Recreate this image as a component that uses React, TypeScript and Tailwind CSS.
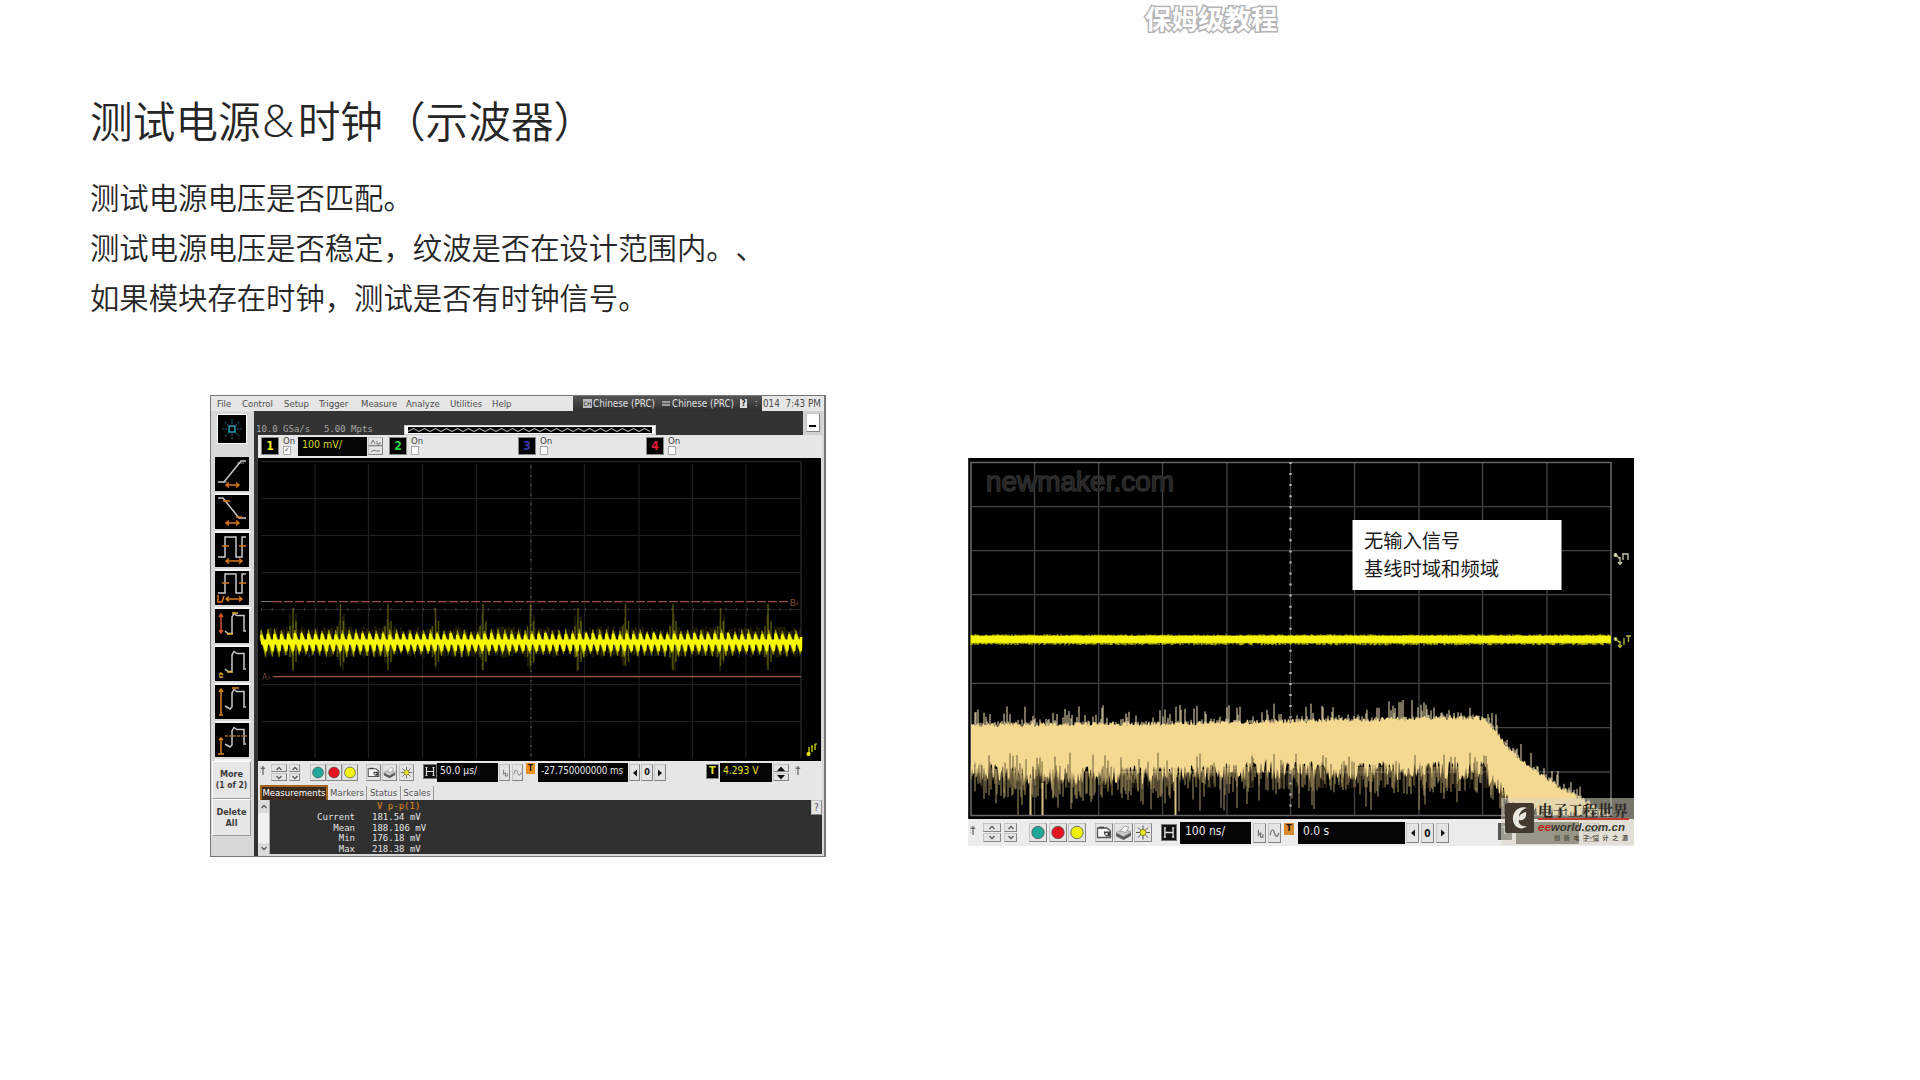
import React from "react";

const CJK = "font-['Noto_Sans_CJK_SC',sans-serif]";
const UI = "font-['DejaVu_Sans_Condensed','DejaVu_Sans',sans-serif]";
const MONO = "font-['DejaVu_Sans_Mono',monospace]";

/* Deterministic noise in 0..1 */
function rng(seed: number) {
  let s = seed;
  return () => {
    s = (s * 1664525 + 1013904223) % 4294967296;
    return s / 4294967296;
  };
}

type P = { className?: string; children?: React.ReactNode };

function Key({ className = "", children }: P) {
  return (
    <div className={`flex shrink-0 items-center justify-center overflow-hidden border border-t-[#c4c4c4] border-l-[#c4c4c4] border-r-[#858585] border-b-[#858585] bg-[#e4e4e4] ${className}`}>
      {children}
    </div>
  );
}

function Chevron({ down }: { down?: boolean }) {
  return (
    <svg width="8" height="5" viewBox="0 0 8 5">
      <path d={down ? "M1.5 1L4 3.6 6.5 1" : "M1.5 4L4 1.4 6.5 4"} fill="none" stroke="#555" strokeWidth="1.3" />
    </svg>
  );
}

function Spinner({ className = "" }: P) {
  return (
    <div className={`flex shrink-0 flex-col gap-px ${className}`}>
      <Key className="flex-1"><Chevron /></Key>
      <Key className="flex-1"><Chevron down /></Key>
    </div>
  );
}

function Dagger({ className = "" }: P) {
  return (
    <svg className={`shrink-0 ${className}`} width="6" height="10" viewBox="0 0 6 10">
      <path d="M3 1V10M0.8 3.2H5.2" stroke="#444" strokeWidth="1" fill="none" />
      <path d="M0.5 1V9" stroke="#aaa" strokeWidth="0.8" strokeDasharray="1 1" />
    </svg>
  );
}

function Dot({ color, className = "" }: P & { color: string }) {
  return (
    <Key className={className}>
      <svg width="100%" height="100%" viewBox="0 0 16 16">
        <circle cx="8" cy="8" r="6.2" fill={color} stroke="#555" strokeWidth="0.8" />
      </svg>
    </Key>
  );
}

function Camera() {
  return (
    <svg width="100%" height="100%" viewBox="0 0 16 16">
      <path d="M1.5 3.5H11L14.5 6.5V13H1.5Z" fill="#f7f7f7" stroke="#555" strokeWidth="1.3" />
      <path d="M3 3H8" stroke="#444" strokeWidth="1.6" />
      <path d="M8 7H14V12H10L8 9.5Z" fill="#3c3c3c" />
      <circle cx="10.5" cy="9.5" r="1.3" fill="#ddd" />
    </svg>
  );
}

function Printer() {
  return (
    <svg width="100%" height="100%" viewBox="0 0 16 16">
      <path d="M1 8L8 4.5 15 7.5 8 12Z" fill="#c9c9c9" stroke="#888" strokeWidth="0.6" />
      <path d="M1 8.5L8 12 15 8V11L8 15 1 11.5Z" fill="#595959" />
      <path d="M5 6.5L9 2 13 3 10 8Z" fill="#f8f8f8" stroke="#888" strokeWidth="0.7" />
    </svg>
  );
}

function Sun() {
  return (
    <svg width="100%" height="100%" viewBox="0 0 16 16">
      <path d="M8 1V15M1 8H15M3 3L13 13M13 3L3 13" stroke="#555" strokeWidth="1" />
      <circle cx="8" cy="8" r="3.1" fill="#e8e02a" stroke="#77761a" strokeWidth="0.8" />
    </svg>
  );
}

function Squiggle({ big }: { big?: boolean }) {
  return (
    <svg width="100%" height="100%" viewBox="0 0 10 16">
      <path d={big ? "M1 10C2 4 4 4 5 8S8 12 9 8" : "M4 5V10L6 8V12M6 12H8V9"} fill="none" stroke="#777" strokeWidth="1.1" />
    </svg>
  );
}

function Arrow({ right }: { right?: boolean }) {
  return (
    <svg width="6" height="8" viewBox="0 0 6 8">
      <path d={right ? "M1 0.5L5 4 1 7.5Z" : "M5 0.5L1 4 5 7.5Z"} fill="#111" />
    </svg>
  );
}

function HBox({ className = "" }: P) {
  return (
    <div className={`shrink-0 border border-[#777] bg-[#111] ${className}`}>
      <svg className="block h-full w-full" viewBox="0 0 12 12">
        <path d="M2.5 2V10M9.5 2V10M2.5 6H9.5M1.5 2H3.5M8.5 2H10.5M1.5 10H3.5M8.5 10H10.5" stroke="#ddd" strokeWidth="1.2" />
      </svg>
    </div>
  );
}

function Field({ className = "", children }: P) {
  return <div className={`shrink-0 overflow-hidden whitespace-nowrap ${className}`}>{children}</div>;
}

/* Measurement shortcut glyphs in the side bar */
const steps = [
  <g key="a"><path d="M3 25H9L26 4H31" /><path d="M7 25H12M22 6H29" strokeWidth="0.7" /><path className="stroke-[#d9761c]" d="M12 28H23M14 25.5L11 28 14 30.5M21 25.5L24 28 21 30.5" /></g>,
  <g key="b"><path d="M3 3H8L24 23H31" /><path className="stroke-[#d9761c]" d="M8 6H15M21 22H27M12 28H23M14 25.5L11 28 14 30.5M21 25.5L24 28 21 30.5" /></g>,
  <g key="c"><path d="M3 24H10V4H21V24H27V4H31" /><path className="stroke-[#d9761c]" d="M7 13H14M24 13H31M12 28H26M14 25.5L11 28 14 30.5M24 25.5L27 28 24 30.5" /></g>,
  <g key="d"><path d="M3 22H10V3H21V22H27V3H31" /><path className="stroke-[#d9761c]" d="M7 12H14M24 12H31M12 28H26M14 25.5L11 28 14 30.5M24 25.5L27 28 24 30.5M3 24V31H7M9 25L7 31" /></g>,
  <g key="e"><path d="M10 22L13 24.5H17V8L19 4.5 22 6.5H29V22H31" /><path className="stroke-[#d9552c]" d="M6 6V23M4 8L6 5 8 8M4 21L6 24 8 21" /><path className="stroke-[#e0a92c]" d="M17 4H23M12 25H18" /></g>,
  <g key="f"><path d="M10 22L13 24.5H17V8L19 4.5 22 6.5H29V22H31" /><path className="stroke-[#e0a92c]" d="M12 25H18M4 30H8M4 28L6 26 8 28" /></g>,
  <g key="g"><path d="M10 21L15 24 17 22V8L19 4.5 22 6.5H29V22H31" /><path className="stroke-[#d9861c]" d="M6 5V30M4 7L6 4 8 7M4 30H8M17 3H24" /></g>,
  <g key="h"><path d="M10 21L15 24 17 22V8L19 4.5 22 6.5H29V21H31" /><path className="stroke-[#d9861c]" d="M6 16V31M4 17L6 15 8 17M3 31H9" /><path className="stroke-[#a8641c]" strokeDasharray="3 1" d="M10 13H32" /></g>,
];

function SideBar() {
  return (
    <div className="flex w-[43px] shrink-0 flex-col bg-[#d8d8d8] pl-[4px]">
      <div className="mt-[3px] ml-[2px] h-[30px] w-[30px] border border-white bg-black">
        <svg viewBox="0 0 28 28" className="block h-full w-full">
          <g stroke="#18606e" strokeWidth="1.1" fill="none">
            <path d="M14 4V9M14 19V25M4 14H9M19 14H24M7 7L10 10M18 18L21 21M21 7L18 10M7 21L10 18" strokeDasharray="2 1" />
            <rect x="11" y="11" width="6" height="6" stroke="#2ba0b0" strokeWidth="1.5" />
          </g>
        </svg>
      </div>
      <div className="mt-[13px] flex flex-col">
        {steps.map((g, i) => (
          <div key={i} className="h-[38px] w-[36px] border-b-2 border-[#f4f4f4]">
            <svg width="34" height="34" viewBox="0 0 34 34" preserveAspectRatio="none" className="block bg-black">
              <g fill="none" stroke="#c8c8c8" strokeWidth="1.5">{g}</g>
            </svg>
          </div>
        ))}
      </div>
      <div className={`-ml-[3px] flex h-[38px] w-[39px] flex-col items-center justify-center border border-white border-r-[#999] border-b-[#999] bg-[#e6e6e6] text-[9px] leading-[11px] font-bold text-[#3a3a3a] ${UI}`}>
        <span>More</span><span className="text-[8.5px]">(1 of 2)</span>
      </div>
      <div className={`-ml-[3px] flex h-[37px] w-[39px] flex-col items-center justify-center border border-white border-r-[#999] border-b-[#999] bg-[#e6e6e6] text-[9px] leading-[11px] font-bold text-[#3a3a3a] ${UI}`}>
        <span>Delete</span><span>All</span>
      </div>
    </div>
  );
}

function MenuBar() {
  return (
    <div className={`flex h-[15px] shrink-0 items-center bg-[#e6e6e6] text-[9.5px] leading-[14px] whitespace-nowrap text-[#4c4c4c] ${UI}`}>
      <span className="ml-[6px] w-[25px]">File</span>
      <span className="w-[42px]">Control</span>
      <span className="w-[35px]">Setup</span>
      <span className="w-[42px]">Trigger</span>
      <span className="w-[45px]">Measure</span>
      <span className="w-[44px]">Analyze</span>
      <span className="w-[42px]">Utilities</span>
      <span className="w-[81px]">Help</span>
      <div className="flex h-[16px] w-[189px] shrink-0 items-center bg-linear-to-b from-[#555] to-[#2c2c2c] text-[9.8px] text-[#e0e0e0]">
        <span className="ml-[10px] flex h-[9px] w-[9px] items-center justify-center bg-[#bbb] text-[6px] text-[#222]">CH</span>
        <span className="ml-[1px] w-[69px]">Chinese (PRC)</span>
        <svg width="8" height="5"><rect width="8" height="5" fill="#999" /><path d="M0 2.5H8" stroke="#555" /></svg>
        <span className="ml-[2px] w-[68px]">Chinese (PRC)</span>
        <span className="flex h-[9px] w-[7px] items-center justify-center bg-[#ddd] text-[8px] font-bold text-[#222]">?</span>
        <span className="ml-[8px] text-[8px]">:</span>
      </div>
      <span className="ml-px text-[9.8px]">014&nbsp; 7:43 PM</span>
    </div>
  );
}

function Channel({ n, color, checked, children, className = "" }: P & { n: string; color: string; checked?: boolean }) {
  return (
    <div className={`flex shrink-0 items-start ${className}`}>
      <div className="mt-[2px] flex h-[18px] w-[18px] items-center justify-center border border-[#888] bg-black text-[12px] font-bold" style={{ color }}>{n}</div>
      <div className="ml-[4px] flex w-[14px] flex-col text-[9.5px] leading-[11px] text-[#444]">
        <span>On</span>
        <span className="flex h-[9px] w-[8px] items-center justify-center border border-[#aaa] bg-white text-[7px]">{checked ? "✓" : ""}</span>
      </div>
      {children}
    </div>
  );
}

function scopeTrace() {
  const r = rng(7);
  let saw = "";
  let glow = "";
  let haze = "";
  const period = 6.77;
  for (let x = 3; x < 542; x += period) {
    const up = 171 + r() * 3;
    const dn = 195 + r() * 4;
    const e = Math.min(543, x + period);
    saw += `${saw ? "L" : "M"}${x.toFixed(1)} ${(176 + r() * 2).toFixed(1)}L${Math.min(543, x + 5).toFixed(1)} 192L${e.toFixed(1)} ${(177 + r() * 2).toFixed(1)}`;
    glow += `M${(x - 1).toFixed(1)} 182L${x.toFixed(1)} ${up.toFixed(1)}L${(x + 3).toFixed(1)} 181L${(x + 6).toFixed(1)} 187L${(x + 4.6).toFixed(1)} ${dn.toFixed(1)}L${(x + 2).toFixed(1)} 188Z`;
  }
  for (let x = 3; x < 543; x += 1) {
    const boost = (x - 35 + 478) % 47.5 < 7 ? 14 : 0;
    if (r() > 0.5) haze += `M${x} ${(174 - r() * (6 + boost)).toFixed(1)}V${(194 + r() * (6 + boost)).toFixed(1)}`;
  }
  return { saw, glow, haze };
}

function ScopePlot() {
  const t = scopeTrace();
  const xs = [57, 110.5, 164.5, 218.5, 273, 326.5, 381, 434.5, 488];
  const ys = [40.5, 77.5, 114.5, 151.5, 226.5, 263.5];
  return (
    <svg width="563" height="303" viewBox="0 0 563 303" className="block shrink-0 bg-black">
      <g stroke="#202020" strokeWidth="1.2">
        {xs.map((x) => <path key={x} d={`M${x} 6V300`} />)}
        {ys.map((y) => <path key={y} d={`M3 ${y}H543`} />)}
        <path d="M3 3.5H543V300" fill="none" stroke="#2a2a2a" />
      </g>
      <path d="M273 8V298" stroke="#444" strokeWidth="2" strokeDasharray="1.5 7.8" />
      <path d="M3 151.5H543" stroke="#3a3a3a" strokeWidth="3" strokeDasharray="1 9.8" />
      <path d="M3 143.5H15" stroke="#777" />
      <path d="M15 143.7H530" stroke="#93503f" strokeWidth="1.2" strokeDasharray="9 2" />
      <path d="M15 218.6H543" stroke="#9c5843" strokeWidth="1.3" />
      <text x="532" y="147.5" className={UI} fontSize="9.5" fill="#93503f">B›</text>
      <text x="4" y="222" className={UI} fontSize="9" fill="#6b4a42">A›</text>
      <path d={t.haze} stroke="#8c8c14" strokeWidth="1" opacity="0.35" />
      {[0, 1, 2, 3, 4, 5, 6, 7, 8, 9, 10].map((i) => {
        const x = 35 + i * 47.5;
        return <path key={i} d={`M${x} ${i % 3 === 0 ? 150 : 146}V${i % 2 ? 208 : 212}M${x + 3} 163V204M${x - 3} 168V199`} stroke="#8e8e1c" strokeWidth="1.5" opacity="0.55" />;
      })}
      <path d={t.glow} fill="#d2d200" stroke="#a8a800" strokeWidth="0.8" opacity="0.85" />
      <path d={t.saw} fill="none" stroke="#f8f800" strokeWidth="2.6" strokeLinejoin="round" transform="translate(0 0)" />
      <path d="M3 184H543" stroke="#f8f800" strokeWidth="5" />
      <g stroke="#e8e800" fill="none" strokeWidth="1.2">
        <path d="M551 289V296M554 288V294M557 286V292M553 288H555M557 286H559" /><circle cx="550.5" cy="296" r="1.5" fill="#e8e800" />
      </g>
    </svg>
  );
}

function ScopeControls() {
  return (
    <div className={`flex h-[23px] shrink-0 items-start bg-[#e6e6e6] pt-[3px] text-[#111] ${UI}`}>
      <Dagger className="mt-px ml-[2px]" />
      <Spinner className="ml-[5px] h-[17px] w-[16px]" />
      <Spinner className="ml-[2px] h-[17px] w-[11px]" />
      <Dot color="#1fa89b" className="ml-[10px] h-[17px] w-[16px]" />
      <Dot color="#e3121c" className="h-[17px] w-[16px]" />
      <Dot color="#f2f20c" className="h-[17px] w-[16px]" />
      <Key className="ml-[8px] h-[17px] w-[15px]"><Camera /></Key>
      <Key className="ml-px h-[17px] w-[15px]"><Printer /></Key>
      <Key className="ml-[2px] h-[17px] w-[15px]"><Sun /></Key>
      <HBox className="ml-[9px] h-[15px] w-[14px]" />
      <Field className="-mt-px ml-0 h-[19px] w-[61px] bg-[#050505] pl-[3px] text-[10.2px] leading-[16px] text-[#e8e8e8]">50.0 µs/</Field>
      <Key className="ml-px h-[17px] w-[11px]"><Squiggle /></Key>
      <Key className="ml-[2px] h-[17px] w-[11px]"><Squiggle big /></Key>
      <div className="-mt-px ml-[3px] flex h-[11px] w-[9px] items-center justify-center bg-[#ec8f1e] text-[8px] font-bold">T</div>
      <Field className="-mt-px ml-[3px] h-[19px] w-[90px] bg-[#050505] pl-[3px] text-[9.8px] leading-[16px] tracking-[-0.1px] text-[#e8e8e8]">-27.750000000 ms</Field>
      <Key className="ml-px h-[17px] w-[11px]"><Arrow /></Key>
      <Key className="ml-px h-[17px] w-[12px] text-[9px] font-bold">0</Key>
      <Key className="ml-[1px] h-[17px] w-[12px]"><Arrow right /></Key>
      <div className="ml-[40px] flex h-[15px] w-[13px] items-center justify-center border border-[#888] bg-black text-[11px] font-bold text-[#e0e02a]">T</div>
      <Field className="-mt-px ml-px h-[19px] w-[52px] bg-[#050505] pl-[3px] text-[10.2px] leading-[16px] text-[#e6e62a]">4.293 V</Field>
      <div className="ml-px flex h-[17px] w-[16px] flex-col gap-px">
        <Key className="flex-1"><svg width="8" height="5"><path d="M0 5L4 0.5 8 5Z" fill="#111" /></svg></Key>
        <Key className="flex-1"><svg width="8" height="5"><path d="M0 0L4 4.5 8 0Z" fill="#111" /></svg></Key>
      </div>
      <Dagger className="mt-px ml-[6px]" />
    </div>
  );
}

function Measurements() {
  const rows = [["Current", "181.54 mV"], ["Mean", "188.106 mV"], ["Min", "176.18 mV"], ["Max", "218.38 mV"]];
  return (
    <div className="flex h-[54px] shrink-0 items-start bg-[#303030]">
      <div className="flex h-[54px] w-[12px] flex-col items-center justify-between border-r border-[#aaa] bg-[#f2f2f2]">
        <div className="flex h-[13px] w-full items-center justify-center bg-[#dcdcdc]"><Chevron /></div>
        <div className="flex h-[11px] w-full items-center justify-center bg-[#dcdcdc]"><Chevron down /></div>
      </div>
      <div className={`flex flex-1 flex-col pt-px text-[9px] leading-[10.8px] text-[#e2e2e2] ${MONO}`}>
        <div className="pl-[107px] text-[#e08a1c]">V p-p(1)</div>
        {rows.map(([k, v]) => (
          <div key={k} className="flex">
            <span className="w-[85px] text-right">{k}</span>
            <span className="pl-[17px] whitespace-pre">{v}</span>
          </div>
        ))}
      </div>
      <Key className={`h-[15px] w-[11px] text-[10px] text-[#555] ${UI}`}>?</Key>
    </div>
  );
}

function LeftScope() {
  return (
    <div className="flex h-[462px] w-[616px] flex-col border border-[#777] border-r-2 bg-[#d8d8d8]">
      <MenuBar />
      <div className="flex min-h-0 flex-1">
        <SideBar />
        <div className="flex w-[568px] flex-col border-l-[4px] border-[#333]">
          <div className="flex h-[24px] shrink-0 items-end bg-[#333]">
            <span className={`-ml-[2px] w-[148px] text-[9px] leading-[12px] whitespace-pre text-[#a5a5a5] ${MONO}`}>{"10.0 GSa/s  "}<span className="ml-[3px]">5.00 Mpts</span></span>
            <div className="flex h-[10px] w-[252px] items-center border border-[#ccc] bg-white px-[3px]">
              <svg width="244" height="6" viewBox="0 0 244 6" className="bg-black">
                <path d={"M0 4.5" + Array.from({ length: 22 }, (_, i) => `L${i * 11 + 5.5} 1.5L${i * 11 + 11} 4.5`).join("")} fill="none" stroke="#999" strokeWidth="1.1" />
              </svg>
            </div>
            <div className="ml-auto flex h-[24px] w-[19px] items-start justify-center bg-[#d0d0d0] pt-[2px]">
              <Key className="h-[19px] w-[14px] items-end bg-white"><span className="mb-[4px] h-[2px] w-[7px] bg-black" /></Key>
            </div>
          </div>
          <div className={`flex h-[23px] shrink-0 bg-[#e6e6e6] pl-[3px] ${UI}`}>
            <Channel n="1" color="#e8e81c" checked className="w-[128px]">
              <Field className="mt-[2px] ml-[1px] h-[19px] w-[69px] bg-[#050505] pl-[4px] text-[10.5px] leading-[15px] text-[#d8d82a]">100 mV/</Field>
              <div className="mt-[2px] ml-px flex h-[18px] w-[15px] flex-col">
                <Key className="flex-1"><svg width="13" height="7"><path d="M2 6L4 2 6 6M8 6V3M8 6H11V4" fill="none" stroke="#777" /></svg></Key>
                <Key className="flex-1"><svg width="13" height="7"><path d="M2 5L5 3 7 4 11 4" fill="none" stroke="#777" /></svg></Key>
              </div>
            </Channel>
            <Channel n="2" color="#24d84a" className="w-[129px]" />
            <Channel n="3" color="#3a3aa8" className="w-[128px]" />
            <Channel n="4" color="#e0183c" className="w-[128px]" />
          </div>
          <ScopePlot />
          <ScopeControls />
          <div className={`flex h-[16px] shrink-0 items-end bg-[#e6e6e6] pl-[2px] text-[9.5px] leading-[14px] text-[#555] ${UI}`}>
            <span className="flex h-[15px] w-[68px] justify-center border-2 border-b-0 border-[#a8651c] bg-[#3a2c20] text-white"><span className="-mt-px">Measurements</span></span>
            <span className="w-[39px] border-r border-[#999] text-center">Markers</span>
            <span className="w-[34px] border-r border-[#999] text-center">Status</span>
            <span className="w-[33px] border-r border-[#999] text-center">Scales</span>
          </div>
          <Measurements />
        </div>
      </div>
    </div>
  );
}

function spectrum() {
  const r = rng(42);
  const lerp = (pts: number[][], x: number) => {
    for (let i = 1; i < pts.length; i++) {
      if (x <= pts[i][0]) {
        const [a, b] = [pts[i - 1], pts[i]];
        return a[1] + ((b[1] - a[1]) * (x - a[0])) / (b[0] - a[0]);
      }
    }
    return pts[pts.length - 1][1];
  };
  const top = [[0, 265], [200, 264], [340, 261], [480, 258], [510, 258], [520, 262], [542, 290], [562, 308], [592, 327], [618, 342], [643, 358]];
  const bot = [[0, 312], [60, 318], [200, 317], [300, 312], [420, 313], [515, 312], [535, 335], [550, 357], [643, 357]];
  let body = "M3 290";
  let hair = "";
  let bright = "";
  let lower = "";
  for (let x = 3; x < 641; x += 1) {
    body += `L${x} ${(lerp(top, x) + r() * 5 - 1).toFixed(1)}`;
    if (r() > 0.55) bright += `M${x} ${lerp(top, x) + 3}V${(lerp(top, x) - Math.pow(r(), 3) * 17).toFixed(1)}`;
  }
  for (let x = 640; x >= 3; x -= 1) {
    const b = lerp(bot, x);
    body += `L${x} ${Math.min(357, b + (r() - 0.5) * 20).toFixed(1)}`;
    if (x < 545 && r() > 0.4) lower += `M${x} ${b - 4}V${Math.min(357, b + r() * 24).toFixed(1)}`;
    if (x < 545 && r() > 0.87) hair += `M${x} ${b}V${Math.min(357, b + 12 + r() * 28).toFixed(1)}`;
  }
  return { body: body + "Z", bright, lower, hair };
}

function darkGaps() {
  const r = rng(99);
  let d = "";
  for (let x = 6; x < 520; x += 1) if (r() > 0.8) d += `M${x} ${(312 - r() * 18).toFixed(1)}V330`;
  return d;
}

function yellowBand() {
  const r = rng(5);
  let d = "";
  for (let x = 3; x < 643; x += 1) d += `M${x} ${(176.2 + r() * 2).toFixed(1)}V${(184.8 + r() * 2.6).toFixed(1)}`;
  return d;
}

function SpectrumPlot() {
  const s = spectrum();
  const xs = [66.5, 130.7, 194.5, 259, 322.5, 386.5, 451, 514.5, 579];
  const ys = [48.7, 92.7, 136.7, 181, 225.3, 269.7, 314];
  return (
    <svg width="666" height="361" viewBox="0 0 666 361" className="block shrink-0 bg-black">
      <g stroke="#444" strokeWidth="1.3">
        {xs.map((x) => <path key={x} d={`M${x} 5V357`} />)}
        {ys.map((y) => <path key={y} d={`M3 ${y}H643`} />)}
      </g>
      <path d="M3 4.5H643V357.5H3Z" fill="none" stroke="#666" strokeWidth="1.6" />
      <path d="M0.5 0V361" stroke="#333" />
      <path d="M322.5 4V357" stroke="#b5b5b5" strokeWidth="2.4" strokeDasharray="2 9.05" />
      <text x="18" y="32.5" textLength="188" lengthAdjust="spacingAndGlyphs" fontSize="28" className="font-['Liberation_Sans',sans-serif]" fill="#1c1c1c" stroke="#303030" strokeWidth="1.4">newmaker.com</text>
      <path d={yellowBand()} stroke="#b4b400" strokeWidth="1.2" />
      <path d="M3 181.3H643" stroke="#f4f40c" strokeWidth="7" />
      <path d={s.hair} stroke="#8c7d58" strokeWidth="1.2" />
      <path d={s.lower} stroke="#a8935f" strokeWidth="1" />
      <path d={s.bright} stroke="#efe0b4" strokeWidth="1" />
      <path d={s.body} fill="#f5d990" />
      <path d={darkGaps()} stroke="#4d4128" strokeWidth="1" opacity="0.8" />
      <path d="M62.5 320V357M207.5 310V357M74.5 325V357" stroke="#d9c182" strokeWidth="2" />
      <rect x="384.5" y="62" width="209" height="70" fill="#fff" />
      <g className={CJK} fontSize="19.3" fill="#1a1a1a">
        <text x="396" y="90">无输入信号</text>
        <text x="396" y="118">基线时域和频域</text>
      </g>
      <g fill="none" stroke="#c9c9a8" strokeWidth="1.3">
        <circle cx="647.5" cy="97" r="1.3" fill="#eee" /><path d="M648 97L652 101M652 99V107M655 102V95M655 96H660V102M650 104L652 106.5 654 104" />
      </g>
      <g fill="none" stroke="#b9b94a" strokeWidth="1.3">
        <circle cx="647.5" cy="181" r="1.3" fill="#eee" /><path d="M648 181L652 185M652 183V190M656 180V187M658 178H663M660.5 178V184M650 187L652 189.5 654 187" />
      </g>
    </svg>
  );
}

function Brand() {
  return (
    <div className="absolute right-0 bottom-px flex h-[47px] w-[133px] bg-[#d9d5c4]/55 pt-[5px] pl-[4px]">
      <svg width="29" height="30" viewBox="0 0 29 30" className="shrink-0">
        <rect width="29" height="30" rx="2" fill="#43382d" />
        <path d="M22 5C14 2 7 9 8 17C9 25 17 28 22 23C17 24 13 21 14 17C19 18 22 14 21 9C18 10 15 11 14 14C14 10 17 6 22 5Z" fill="#e9e6df" />
      </svg>
      <div className="ml-[4px] flex w-[92px] flex-col">
        <span className="h-[15px] text-[15px] leading-[14px] font-bold whitespace-nowrap text-[#2e2a22] font-['Noto_Serif_CJK_SC','Noto_Sans_CJK_SC',serif]">电子工程世界</span>
        <span className="h-[2px] w-[91px] bg-[#c43a2c]" />
        <span className="h-[12px] text-[11.5px] leading-[14px] font-bold whitespace-nowrap text-[#38362c] italic font-['Liberation_Sans',sans-serif]"><span className="text-[#b8281c]">ee</span>world.com.cn</span>
        <span className={`mt-px ml-[16px] flex w-[74px] justify-between text-[6px] leading-[9px] font-bold text-[#55503f] ${CJK}`}>
          {"创新电子设计之源".split("").map((c, i) => <span key={i}>{c}</span>)}
        </span>
      </div>
    </div>
  );
}

function RightScope() {
  return (
    <div className="relative mt-[63px] flex h-[388px] w-[666px] flex-col bg-[#ececec]">
      <SpectrumPlot />
      <div className={`flex h-[27px] items-start pt-[4px] text-[#111] ${UI}`}>
        <Dagger className="mt-[2px] ml-[2px]" />
        <Spinner className="ml-[7px] h-[19px] w-[18px]" />
        <Spinner className="ml-[3px] h-[19px] w-[13px]" />
        <Dot color="#1fa898" className="ml-[12px] h-[19px] w-[18px]" />
        <Dot color="#e3121c" className="ml-[2px] h-[19px] w-[18px]" />
        <Dot color="#f2f20c" className="ml-px h-[19px] w-[18px]" />
        <Key className="ml-[9px] h-[19px] w-[18px]"><Camera /></Key>
        <Key className="ml-[1px] h-[19px] w-[19px]"><Printer /></Key>
        <Key className="ml-px h-[19px] w-[18px]"><Sun /></Key>
        <HBox className="mt-px ml-[9px] h-[17px] w-[16px]" />
        <Field className="-mt-px ml-[3px] h-[22px] w-[71px] bg-[#050505] pl-[5px] text-[12px] leading-[19px] text-[#e8e8e8]">100 ns/</Field>
        <Key className="ml-[2px] h-[20px] w-[13px]"><Squiggle /></Key>
        <Key className="ml-[2px] h-[20px] w-[13px]"><Squiggle big /></Key>
        <div className="ml-[3px] flex h-[12px] w-[10px] items-center justify-center bg-[#d98a2e] text-[9px] font-bold">T</div>
        <Field className="-mt-px ml-[4px] h-[22px] w-[107px] bg-[#050505] pl-[5px] text-[12px] leading-[19px] text-[#e8e8e8]">0.0 s</Field>
        <Key className="ml-[1px] h-[20px] w-[13px]"><Arrow /></Key>
        <Key className="ml-[2px] h-[20px] w-[13px] text-[10px] font-bold">0</Key>
        <Key className="ml-[2px] h-[20px] w-[13px]"><Arrow right /></Key>
        <div className="ml-[49px] flex h-[17px] w-[14px] items-center justify-center bg-[#555] text-[11px] font-bold text-[#bbb]">T</div>
        <Field className="-mt-px ml-[4px] h-[22px] w-[63px] bg-[#4a493c]" />
        <Spinner className="ml-[4px] h-[19px] w-[16px]" />
      </div>
      <Brand />
    </div>
  );
}

export default function App() {
  return (
    <div className="relative flex h-[1080px] w-[1920px] flex-col overflow-hidden bg-[#fefefe]">
      <div className={`absolute top-px left-[1145px] text-[26.5px] leading-[34px] font-bold whitespace-nowrap text-white [-webkit-text-stroke:3px_#b4b4b4] [paint-order:stroke_fill] ${CJK}`}>保姆级教程</div>
      <header className={`flex h-[395px] shrink-0 flex-col pt-[90px] pl-[90px] text-[#262626] [text-spacing-trim:space-all] ${CJK}`}>
        <h1 className="flex text-[42.67px] leading-[60px] font-[350] whitespace-nowrap">
          <span>测试电源</span><span className="w-[37px] text-center text-[45px] font-['Open_Sans','Noto_Sans',sans-serif]"><span className="-ml-[2px]">&amp;</span></span><span>时钟（示波器）</span>
        </h1>
        <div className="mt-[21px] text-[29.35px] leading-[50px] font-[350] whitespace-nowrap">
          <p>测试电源电压是否匹配。</p>
          <p>测试电源电压是否稳定，纹波是否在设计范围内。、</p>
          <p>如果模块存在时钟，测试是否有时钟信号。</p>
        </div>
      </header>
      <main className="flex items-start pl-[210px]">
        <LeftScope />
        <div className="w-[142px] shrink-0" />
        <RightScope />
      </main>
    </div>
  );
}
